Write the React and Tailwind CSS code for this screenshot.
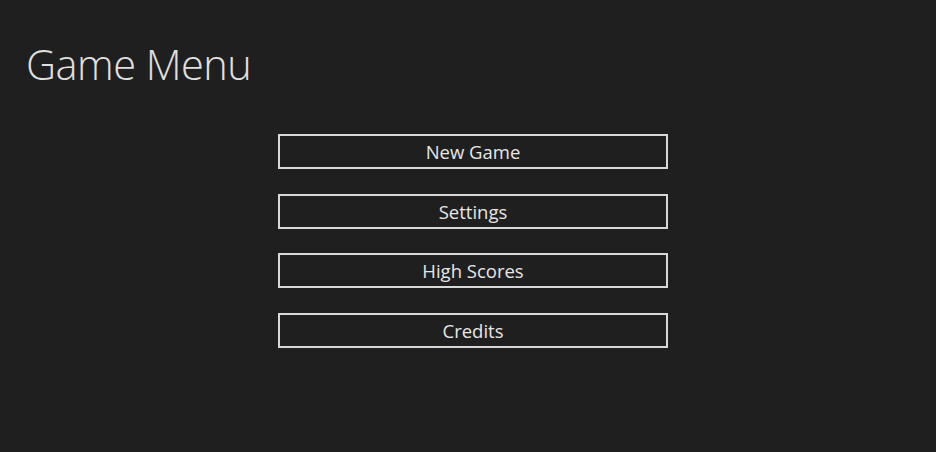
export default function App() {
    const items = ['New Game', 'Settings', 'High Scores', 'Credits'];

    return (
        <div className="w-[936px] h-[452px] bg-[#1f1f1f] text-[#e0e0e0] font-['Open_Sans',sans-serif] overflow-hidden">
            {/* Title */}
            <h1 className="pl-[26px] pt-[38px] text-[41.5px] leading-[52px] font-light tracking-[-0.5px]">
                Game Menu
            </h1>

            {/* Menu */}
            <div className="mt-[44px] ml-[278px] w-[390px] flex flex-col gap-[24.5px]">
                {items.map(label => (
                    <button
                        key={label}
                        className="h-[35px] pt-[2px] border-2 border-[#d8d8d8] text-[18.5px] leading-none text-[#e6e6e6] flex items-center justify-center"
                    >
                        {label}
                    </button>
                ))}
            </div>
        </div>
    );
}
